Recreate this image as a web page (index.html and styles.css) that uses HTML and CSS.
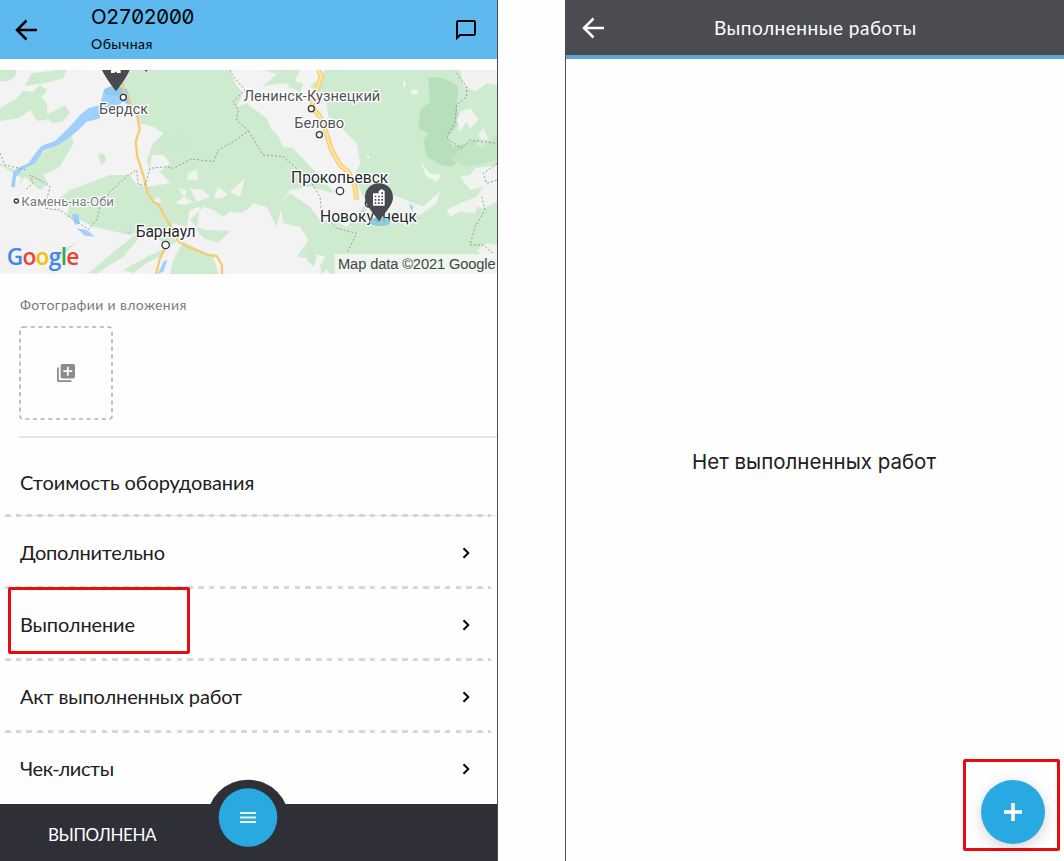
FILE: index.html
```html
<!DOCTYPE html>
<html lang="ru">
<head>
<meta charset="utf-8">
<title>Выполненные работы</title>
<link rel="stylesheet" href="styles.css">
</head>
<body>
<div class="screens">
  <section class="phone phone-left">
    <header class="order-bar">
      <svg class="back" width="24" height="24" viewBox="0 0 24 24"><path d="M23 12H3M12.500 2.500L3 12l9.500 9.500" fill="none" stroke="#000" stroke-width="2.500"/></svg>
      <div class="order-title">
        <div class="order-number">O2702000</div>
        <div class="order-kind">Обычная</div>
      </div>
      <svg class="chat" width="20" height="20" viewBox="0 0 20 20"><path d="M1 18V2.200Q1 1 2.200 1H17.800Q19 1 19 2.200V13.800Q19 15 17.800 15H4Z" fill="none" stroke="#000" stroke-width="2"/></svg>
    </header>
    <svg class="map" width="497" height="204" viewBox="0 30 1491 612">
      <rect y="30" width="1491" height="612" fill="#f3f3f3"/>
      <g fill="#ceebcf">
        <path d="M0 30H50L45 52 25 62 0 65ZM75 75L95 40 170 30H200L190 55 135 70 75 78ZM0 145L50 115 70 92 100 95 120 75 142 90 125 110 142 135 140 180 112 183 90 150 55 175 0 183Z"/>
        <path d="M375 30H690L705 70 730 100 712 140 770 170 830 220 850 260 880 265 930 310 990 320 1020 380 1000 400 930 380 870 390 850 420 830 500 800 440 760 430 730 460 690 455 670 470 640 450 610 440 570 480 590 500 620 510 695 512 680 555 610 535 590 510 600 440 570 450 560 500 520 490 500 510 530 545 500 560 460 520 420 515 390 525 280 500 240 480 200 470 210 430 170 420 210 390 330 345 390 345 410 375 445 380 510 370 480 335 510 310 490 285 455 285 450 335 440 300 460 250 490 220 460 200 420 190 400 130 375 110Z"/>
        <path d="M785 80L845 30H895L885 70 925 80 960 55 975 30H1491V642H990L960 620 975 590 940 580 915 600 890 590 925 540 900 500 850 490 840 430 870 400 930 440 960 480 1000 480 1040 500 1100 430 1060 350 1080 310 1070 250 1020 200 985 170 975 110 930 80 850 70ZM342 82L350 50 385 62 402 55 400 85 372 102Z"/>
        <path d="M0 310L55 335 70 330 125 280 180 250 215 225 220 250 200 285 180 320 130 345 145 370 120 390 90 365 75 350 50 385 65 355 0 315ZM130 170L195 135 210 160 185 185 160 190ZM295 290L300 278 315 285 318 300 305 316ZM265 640L330 585 410 520 425 525 370 590 290 640ZM370 630L450 585 500 565 490 585 440 610 400 640ZM520 600L550 545 640 590 655 642H510ZM140 600L230 545 180 595Z"/>
      </g>
      <path d="M1285 55Q1330 45 1375 80L1370 150 1385 180 1340 235 1360 260 1435 240 1390 290 1355 320 1325 315 1280 290 1270 240 1285 220 1255 205 1260 150 1290 125Z" fill="#b8dfbd"/>
      <path d="M1400 250L1450 265 1480 230 1491 225V300L1400 320 1350 300Z" fill="#c1e5c5"/>
      <g fill="#f3f3f3">
        <path d="M700 30H840L785 80 850 70 930 80 975 110 985 170 1020 200 1070 250 1080 310 1060 350 1080 420 1040 440 960 350 880 265 850 240 770 170 712 140 730 100 705 70ZM845 30H895L885 70 925 80 960 55 975 30Z"/>
        <path d="M640 560L690 515 720 460 760 440 800 450 830 500 900 500 925 540 890 590 960 600 990 642H670Z"/>
      </g>
      <path d="M785 30L845 30H900L885 62 910 72 900 95 868 82 845 45ZM712 140L740 130 800 175 820 225 850 270 720 220Z" fill="#ceebcf"/>
      <g fill="#f1f3f1">
        <path d="M1380 30H1491V75L1460 70 1425 95 1390 75ZM1370 180L1380 155 1412 145 1435 180 1410 205 1400 185 1380 215ZM1435 225L1450 205 1465 240 1448 235 1452 250ZM1260 305L1290 340 1325 345 1310 365 1280 350ZM1380 350L1410 345 1425 325 1491 315V425L1450 445 1430 440 1425 460 1380 455 1350 470 1340 450 1380 430 1430 410 1450 380 1410 390ZM1200 425L1270 440 1290 420 1320 395 1310 430 1260 465 1200 450ZM1090 420L1165 400 1270 440 1250 460 1100 455ZM1210 60L1220 70 1210 85ZM1240 85L1255 95 1250 105 1230 100ZM1100 285L1112 290 1103 298ZM1430 572L1460 550 1491 555V590L1450 590ZM565 340L590 330 595 360 560 360ZM535 385L560 390 555 415ZM640 415L655 380 685 405 660 415ZM690 395L735 355 720 410ZM570 385L610 390 630 410 590 425ZM525 430L550 410 580 425 550 435ZM460 425L475 410 485 430ZM455 300L490 310 488 325 450 325Z"/>
      </g>
      <g fill="#cbe9cc"><path d="M935 560L950 590 940 620 920 600ZM960 610L985 620 965 642ZM490 235L550 220 570 250 530 280 480 270Z"/></g>
      <g fill="#a0cffa">
        <path d="M312 90L380 85 392 120 402 142 390 140 370 125 350 140 300 148 300 175 260 185 235 210 205 235 175 255 130 272 105 310 70 328 48 350 45 382 33 380 40 335 55 323 85 310 110 275 125 257 165 243 205 205 240 165 265 145 300 135Z"/>
        <path d="M215 462H235L240 490 225 495ZM230 505L260 510 285 530 255 527ZM370 510L388 518 395 500 390 523ZM490 605L502 600 490 635 474 641ZM1228 428L1238 440 1245 430 1238 445V457L1230 443Z"/>
      </g>
      <ellipse cx="345" cy="93" rx="34" ry="14" fill="#8ccbed"/>
      <g fill="none" stroke="#f3cc74" stroke-width="7" stroke-linejoin="round">
        <path d="M370 70V95L388 120 412 170 419 208 407 245 412 290 431 350 443 400 460 425 475 433 492 465 513 500 535 545 570 563 625 585 650 588 666 615V642M500 555L480 595 468 642"/>
        <path d="M956 30L964 50 950 90 935 140 960 170 975 208 995 270 1020 315 1045 335 1065 380 1070 420" stroke-width="15"/>
      </g>
      <path d="M956 30L964 50 950 90 935 140 960 170 975 208 995 270 1020 315 1045 335 1065 380 1070 420" fill="none" stroke="#ffe29c" stroke-width="8"/>
      <g fill="none" stroke="#858b86" stroke-width="2.500" stroke-dasharray="6 6">
        <path d="M690 30L700 50 735 90 700 125 715 150 710 180 745 213 700 245 655 270 640 305 600 300 575 297 520 325 500 320 450 325 437 372 415 375 410 330 385 345 330 395 300 440 290 480 265 508 215 475 180 450 135 445 140 420 150 380 130 365 90 345 100 370 75 390M745 213L790 285 850 290 890 325 935 370 960 410 965 460 1010 505 1070 520 1040 580M0 280L15 315 80 330"/>
        <path d="M1370 40L1400 80 1400 110 1370 135 1365 185 1340 235 1385 265 1410 240 1491 250M1491 310L1450 340 1460 370 1491 360M1445 410L1455 450 1425 500 1410 555 1450 555 1491 590"/>
      </g>
      <rect x="1004" y="582" width="487" height="60" fill="#f4f7f4" opacity=".85"/>
      <g fill="#fff" stroke="#33373b" stroke-width="4">
        <circle cx="370" cy="112" r="9"/><circle cx="934" cy="146" r="9"/><circle cx="958" cy="224" r="9"/><circle cx="1020" cy="393" r="11"/><circle cx="497" cy="555" r="11"/><circle cx="1107" cy="430" r="11"/><circle cx="49" cy="423" r="6"/>
      </g>
      <g class="towns">
        <text x="297" y="163" font-size="43" textLength="147">Бердск</text>
        <text x="731" y="124" font-size="44" textLength="410">Ленинск-Кузнецкий</text>
        <text x="883" y="203" font-size="44" textLength="149">Белово</text>
        <text class="minor" x="64" y="437" font-size="40" textLength="278">Камень-на-Оби</text>
        <text class="major" x="873" y="370" font-size="47" textLength="292">Прокопьевск</text>
        <text class="major" x="960" y="485" font-size="47" textLength="291">Новокузнецк</text>
        <text class="major" x="407" y="532" font-size="47" textLength="180">Барнаул</text>
      </g>
      <ellipse cx="1140" cy="485" rx="32" ry="13" fill="#80c7df" opacity=".85"/>
      <path d="M306 30H389Q380 53 348 94Q316 53 306 30Z" fill="#484a4f"/>
      <path d="M333 30H362V39H350V35H344V39H333Z" fill="#fff"/>
      <path d="M434 30H444L438 36Z" fill="#555"/>
      <path d="M1137 370C1110 370 1095 390 1095 413C1095 435 1120 458 1137 484C1154 458 1179 435 1179 413C1179 390 1164 370 1137 370Z" fill="#484a4f"/>
      <path d="M1119 400H1136V393L1145 387L1154 393V437H1119Z" fill="#fff"/>
      <path d="M1124 407h5v5h-5zM1124 417h5v5h-5zM1124 427h5v5h-5zM1134 407h5v5h-5zM1134 417h5v5h-5zM1134 427h5v5h-5zM1144 397h5v5h-5zM1144 407h5v5h-5zM1144 417h5v5h-5zM1144 427h5v5h-5z" fill="#484a4f"/>
      <text class="credit" x="1014" y="626" font-size="44" textLength="473">Map data ©2021 Google</text>
      <text class="google" x="20" y="614" font-size="68" textLength="218"><tspan fill="#4285f4">G</tspan><tspan fill="#ea4335">o</tspan><tspan fill="#fbbc05">o</tspan><tspan fill="#4285f4">g</tspan><tspan fill="#34a853">l</tspan><tspan fill="#ea4335">e</tspan></text>
    </svg>
    <div class="attachments">
      <div class="caption">Фотографии и вложения</div>
      <div class="add-box">
        <svg class="dash" width="94" height="94" viewBox="0 0 94 94"><rect x="1" y="1" width="92" height="92" rx="3" fill="none" stroke="#b1b1b1" stroke-width="1.600" stroke-dasharray="4.200 3.470"/></svg>
        <svg width="18" height="18" viewBox="2 2 20 20"><path fill="#8c8c8c" d="M4 6H2v14c0 1.100.9 2 2 2h14v-2H4V6zm16-4H8c-1.100 0-2 .9-2 2v12c0 1.100.9 2 2 2h12c1.100 0 2-.9 2-2V4c0-1.100-.9-2-2-2zm-1 9h-4v4h-2v-4H9V9h4V5h2v4h4v2z"/></svg>
      </div>
    </div>
    <div class="menu">
      <div class="row first"><span class="t-cost">Стоимость оборудования</span></div>
      <div class="row"><span class="t-extra">Дополнительно</span><svg class="chev" width="8" height="12" viewBox="0 0 8 12"><path d="M1.500 1.200L6.300 6 1.500 10.800" fill="none" stroke="#000" stroke-width="2"/></svg></div>
      <div class="row marked"><span class="t-work">Выполнение</span><svg class="chev" width="8" height="12" viewBox="0 0 8 12"><path d="M1.500 1.200L6.300 6 1.500 10.800" fill="none" stroke="#000" stroke-width="2"/></svg></div>
      <div class="row"><span class="t-act">Акт выполненных работ</span><svg class="chev" width="8" height="12" viewBox="0 0 8 12"><path d="M1.500 1.200L6.300 6 1.500 10.800" fill="none" stroke="#000" stroke-width="2"/></svg></div>
      <div class="row last"><span class="t-check">Чек-листы</span><svg class="chev" width="8" height="12" viewBox="0 0 8 12"><path d="M1.500 1.200L6.300 6 1.500 10.800" fill="none" stroke="#000" stroke-width="2"/></svg></div>
    </div>
    <footer class="status-bar">
      <span class="status">ВЫПОЛНЕНА</span>
      <svg class="menu-button" width="84" height="84" viewBox="0 0 84 84"><circle cx="42" cy="42" r="41.300" fill="#2f2f38"/><circle cx="42" cy="38.500" r="29.300" fill="#29a9e1"/><path d="M34 34h16M34 38.500h16M34 43h16" stroke="#e9f7fd" stroke-width="1.800"/></svg>
    </footer>
  </section>
  <section class="phone phone-right">
    <header class="works-bar">
      <svg class="back" width="24" height="24" viewBox="0 0 24 24"><path d="M23 12H3M12.500 2.500L3 12l9.500 9.500" fill="none" stroke="#fff" stroke-width="2.500"/></svg>
      <h1>Выполненные работы</h1>
    </header>
    <main class="empty">Нет выполненных работ</main>
    <div class="fab-mark"><div class="fab"><svg width="18" height="18" viewBox="0 0 18 18"><path d="M9 0v18M0 9h18" stroke="#fff" stroke-width="3.600"/></svg></div></div>
  </section>
</div>
</body>
</html>
```
FILE: styles.css
```css
*, *::before, *::after { box-sizing: border-box; }
body { margin: 0; background: #fefefe; color: #202020; font-family: Lato, "Open Sans", sans-serif; overflow: hidden; }
.screens { display: flex; justify-content: space-between; width: 1064px; height: 861px; }
.phone { display: flex; flex-direction: column; height: 861px; position: relative; }
.phone-left { width: 498px; border-right: 1px solid #4a4a4f; }
.phone-right { width: 499px; border-left: 1px solid #4a4a4f; }
.order-bar { display: flex; align-items: center; height: 59px; margin-bottom: 11px; padding: 0 21px 0 14px; background: #5db9ee; color: #000; flex: none; }
.order-title { margin-left: 53px; flex: 1; padding-bottom: 6px; }
.order-number { font: 400 20.500px/28px Inter, sans-serif; font-feature-settings: "zero", "tnum"; letter-spacing: -.75px; white-space: nowrap; }
.order-kind { font-size: 14px; line-height: 20px; margin-top: 3px; margin-bottom: -3px; letter-spacing: .5px; }
.map { display: block; flex: none; }
.towns text { font-family: Roboto, sans-serif; fill: #50535a; stroke: #fff; stroke-width: 8px; stroke-linejoin: round; paint-order: stroke; }
.towns .major { fill: #25272b; }
.towns .minor { fill: #777a7e; }
.credit { font-family: "Liberation Sans", sans-serif; fill: #444; }
.google { font-family: "Open Sans", sans-serif; font-weight: 600; }
.attachments { height: 164px; margin-left: 19px; padding-top: 21px; border-bottom: 2px solid #e5e5e5; flex: none; }
.caption { font-size: 14px; line-height: 20px; color: #7b7b7b; letter-spacing: .38px; padding-left: 1px; }
.add-box { display: flex; align-items: center; justify-content: center; position: relative; width: 94px; height: 94px; margin-top: 11px; }
.dash { position: absolute; inset: 0; }
.menu { flex: none; height: 366px; }
.row { display: flex; align-items: center; justify-content: space-between; position: relative; height: 72px; padding: 0 27px 0 20px; font-size: 20px; line-height: 30px; letter-spacing: -.15px; }
.row::after { content: ""; position: absolute; left: 5px; right: 6px; bottom: -1px; height: 3px; background: repeating-linear-gradient(90deg, #d7d7d7 0 5.500px, transparent 5.500px 10.730px); }
.row.last::after { display: none; }
.chev { margin-top: 2px; }
.t-cost { letter-spacing: -.08px; }
.t-extra { letter-spacing: -.2px; }
.t-check { letter-spacing: -.4px; }
.first { height: 78px; padding-top: 10px; }
.first::before { content: ""; position: absolute; left: 17px; right: 0; bottom: 0; height: 1px; background: #e4e4e4; }
.marked::before { content: ""; position: absolute; z-index: 1; left: 8px; top: -1px; width: 182px; height: 67px; border: 3px solid #e80b10; border-radius: 2px; }
.status-bar { position: relative; flex: 1; padding: 19px 0 0 48px; background: #2f2f38; color: #fff; font-size: 17px; line-height: 24px; letter-spacing: -.4px; }
.menu-button { position: absolute; left: 206px; top: -25px; }
.works-bar { display: flex; align-items: center; height: 59px; padding-left: 15px; background: #4b4c50; border-bottom: 4px solid #5ba6d5; color: #fff; flex: none; }
.works-bar h1 { margin: 0 0 0 109px; font-size: 19px; font-weight: 400; line-height: 28px; letter-spacing: .5px; white-space: nowrap; }
.empty { margin: 388px 0 0 126px; font: 20.500px/30px Inter, sans-serif; white-space: nowrap; }
.fab-mark { position: absolute; right: 4px; top: 759px; width: 97px; height: 92px; border: 3px solid #e80b10; border-radius: 2px; padding: 18px 0 0 15px; }
.fab { display: flex; align-items: center; justify-content: center; width: 64px; height: 64px; border-radius: 50%; background: #29a9e1; box-shadow: 0 4px 14px rgba(0,0,0,.16); }
```
